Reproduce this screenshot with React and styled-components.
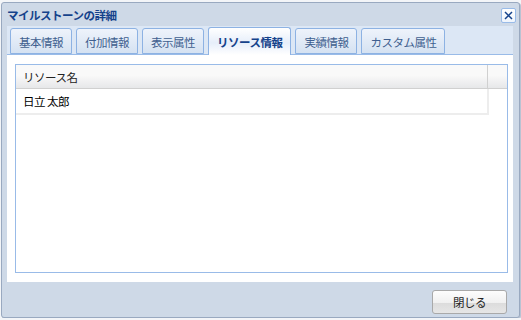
import React from "react";
import styled, { createGlobalStyle } from "styled-components";

const Global = createGlobalStyle`
  html, body { margin: 0; padding: 0; }
  body {
    background: #f3f5f8;
    font-family: "Noto Sans CJK JP", "Noto Sans", sans-serif;
    font-size: 11.5px;
    letter-spacing: -0.5px;
    padding: 2px 0 0 1px;
  }
`;

const Window = styled.div`
  box-sizing: border-box;
  width: 519px;
  height: 316px;
  background: #ced9e7;
  border: 1px solid #99a9c0;
  border-radius: 3px;
  display: flex;
  flex-direction: column;
  box-shadow: 1px 1px 0 #b9c3d3;
`;

const Header = styled.div`
  height: 23px;
  display: flex;
  align-items: center;
  justify-content: space-between;
  padding: 0 3px 0 5px;
`;

const Title = styled.span`
  font-weight: bold;
  color: #15428b;
  line-height: 14px;
`;

const CloseBtn = styled.button`
  width: 15px;
  height: 15px;
  padding: 0;
  margin-top: 1px;
  border: 1px solid #99bbe8;
  border-radius: 2px;
  background: linear-gradient(#ffffff, #eef4fc);
  display: flex;
  align-items: center;
  justify-content: center;
`;

const TabPanel = styled.div`
  margin: 0 6px 0 5px;
  flex: 1;
  display: flex;
  flex-direction: column;
`;

const TabStrip = styled.div`
  height: 29px;
  box-sizing: border-box;
  background: #dce7f5;
  border-bottom: 1px solid #99bbe8;
  display: flex;
  align-items: flex-end;
  padding-left: 3px;
  gap: 4px;
`;

const Tab = styled.div`
  box-sizing: border-box;
  height: ${(p) => (p.$active ? "28px" : "26px")};
  margin-bottom: ${(p) => (p.$active ? "-1px" : "0")};
  padding: 0 8px;
  border: 1px solid #8db2e3;
  border-bottom: ${(p) => (p.$active ? "none" : "1px solid #8db2e3")};
  border-radius: 3px 3px 0 0;
  background: ${(p) =>
    p.$active
      ? "linear-gradient(#ffffff, #e6eefa 55%, #ffffff)"
      : "linear-gradient(#eef3fb, #d5e2f2)"};
  color: ${(p) => (p.$active ? "#15428b" : "#3f5f8f")};
  font-weight: ${(p) => (p.$active ? "bold" : "normal")};
  display: flex;
  align-items: center;
  padding-top: 1px;
`;

const Body = styled.div`
  flex: 1;
  background: #fff;
  padding: 9px 5px 9px 8px;
  display: flex;
`;

const Grid = styled.div`
  flex: 1;
  border: 1px solid #99bbe8;
  display: flex;
  flex-direction: column;
`;

const HeadRow = styled.div`
  display: flex;
  height: 23px;
  background: linear-gradient(#f9f9f9, #f9f9f9 45%, #e6e7e9);
  border-bottom: 1px solid #d0d0d0;
`;

const HeadCell = styled.div`
  flex: 1;
  display: flex;
  align-items: center;
  padding-left: 7px;
  color: #222;
  border-right: 1px solid #d0d0d0;
`;

const HeadSpacer = styled.div`
  width: 19px;
`;

const Row = styled.div`
  width: 473px;
  height: 26px;
  display: flex;
  align-items: center;
  padding-left: 7px;
  box-sizing: border-box;
  border-bottom: 2px solid #ededed;
  border-right: 2px solid #ededed;
  color: #000;
`;

const Footer = styled.div`
  height: 35px;
  display: flex;
  align-items: flex-start;
  justify-content: flex-end;
  padding: 8px 12px 0 0;
  box-sizing: border-box;
`;

const Button = styled.button`
  width: 75px;
  height: 24px;
  border: 1px solid #a9a9a9;
  border-radius: 3px;
  background: linear-gradient(#fdfdfd, #f0f0f0 55%, #dcdcdc 56%, #e6e6e6);
  font-family: inherit;
  font-size: 11.5px;
  letter-spacing: -0.5px;
  color: #222;
  padding: 0;
`;

const tabs = [
  { label: "基本情報" },
  { label: "付加情報" },
  { label: "表示属性" },
  { label: "リソース情報", active: true },
  { label: "実績情報" },
  { label: "カスタム属性" },
];

export default function App() {
  return (
    <>
      <Global />
      <Window>
        <Header>
          <Title>マイルストーンの詳細</Title>
          <CloseBtn aria-label="close">
            <svg width="9" height="9" viewBox="0 0 9 9">
              <path d="M1 1 L8 8 M8 1 L1 8" stroke="#15428b" strokeWidth="1.5" />
            </svg>
          </CloseBtn>
        </Header>
        <TabPanel>
          <TabStrip>
            {tabs.map((t) => (
              <Tab key={t.label} $active={t.active}>
                {t.label}
              </Tab>
            ))}
          </TabStrip>
          <Body>
            <Grid>
              <HeadRow>
                <HeadCell>リソース名</HeadCell>
                <HeadSpacer />
              </HeadRow>
              <Row>日立 太郎</Row>
            </Grid>
          </Body>
        </TabPanel>
        <Footer>
          <Button>閉じる</Button>
        </Footer>
      </Window>
    </>
  );
}
